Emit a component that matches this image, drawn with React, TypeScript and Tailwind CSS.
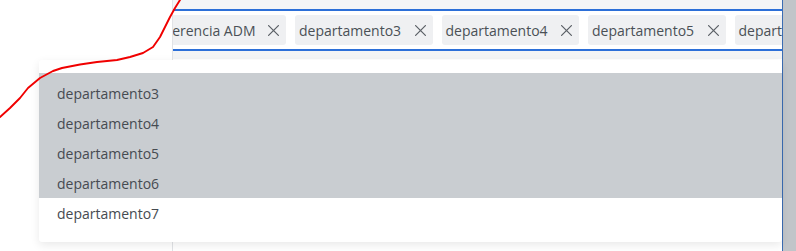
import React from "react";

const XIcon = () => (
  <svg width="11" height="11" viewBox="0 0 11 11" className="shrink-0">
    <path d="M0.6 0.6 L10.4 10.4 M10.4 0.6 L0.6 10.4" stroke="#5e6369" strokeWidth="1.25" strokeLinecap="round" fill="none" />
  </svg>
);

const Chip = ({ label, w }: { label: string; w: string }) => (
  <div className={`${w} h-[30px] shrink-0 flex items-center pl-[4px] pr-[7px] rounded-[3px] bg-[#eff0f2] overflow-hidden`}>
    <span className="text-[14px] text-[#4a5056] whitespace-nowrap">{label}</span>
    <span className="ml-auto flex items-center">
      <XIcon />
    </span>
  </div>
);

export default function App() {
  const items = ["departamento3", "departamento4", "departamento5", "departamento6"];
  return (
    <div
      className="relative w-[796px] h-[251px] overflow-hidden bg-white"
      style={{ fontFamily: '"Open Sans", "Noto Sans", sans-serif' }}
    >
      <div className="flex h-full">
        <div className="w-[172px] shrink-0 bg-white" />
        <div className="w-px shrink-0 bg-[#e1e3e6]" />
        <div className="flex-1 min-w-0 flex flex-col">
          <div className="h-[9px] bg-[#f4f5f7]" />
          <div className="h-[42px] border-y-2 border-[#2c6fd8] overflow-hidden flex items-center bg-white">
            <div className="flex gap-[9px] -ml-[15px] shrink-0">
              <Chip label="Gerencia ADM" w="w-[128px]" />
              <Chip label="departamento3" w="w-[137.5px]" />
              <Chip label="departamento4" w="w-[137.5px]" />
              <Chip label="departamento5" w="w-[137.5px]" />
              <Chip label="departamento6" w="w-[137.5px]" />
            </div>
          </div>
          <div className="h-[8px] bg-[#f3f4f5]" />
          <div className="flex-1 bg-white" />
        </div>
        <div className="w-px shrink-0 bg-[#3b6db3]" />
        <div className="w-[13px] shrink-0 bg-[#c1c5c9]" />
      </div>

      <div className="absolute left-[39px] top-[60px] w-[743px] bg-white rounded-[3px] shadow-[0_3px_10px_rgba(0,0,0,0.09)] pt-[13px] pb-[14px]">
        <div className="bg-[#c9cdd1] pt-[5px]">
          {items.map((t) => (
            <div key={t} className="h-[30px] flex items-center pl-[18px] text-[14px] text-[#464b51]">
              {t}
            </div>
          ))}
        </div>
        <div className="h-[30px] flex items-center pl-[18px] text-[14px] text-[#464b51]">departamento7</div>
      </div>

      <svg className="absolute inset-0 pointer-events-none" width="796" height="251" viewBox="0 0 796 251">
        <polyline
          points="0,117 10,108 20,98 28,88 40,78 53,71 62,68 80,64.5 97,62 117,60 130,57 143,53 153,47 160,37 165,27 170,17 175,8 180,0"
          fill="none"
          stroke="#f00000"
          strokeWidth="1.9"
          strokeLinejoin="round"
          strokeLinecap="round"
        />
      </svg>
    </div>
  );
}
